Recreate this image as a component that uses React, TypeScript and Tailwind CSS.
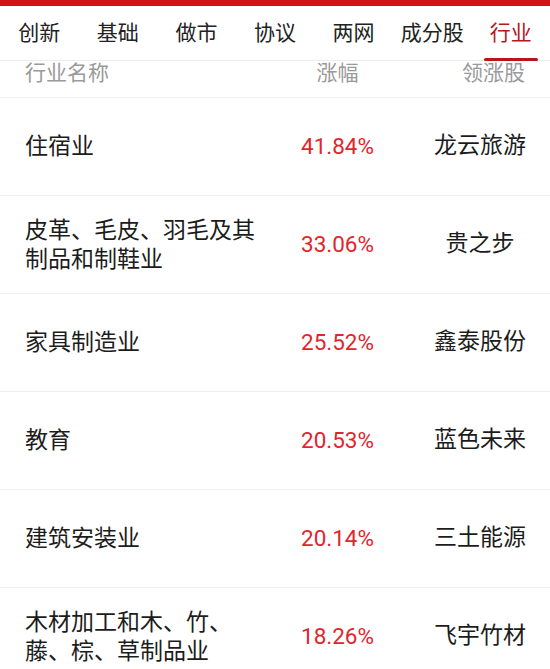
import React from 'react';

const tabs = ['创新', '基础', '做市', '协议', '两网', '成分股', '行业'];

const rows = [
  { name: '住宿业', pct: '41.84%', lead: '龙云旅游' },
  { name: '皮革、毛皮、羽毛及其制品和制鞋业', pct: '33.06%', lead: '贵之步' },
  { name: '家具制造业', pct: '25.52%', lead: '鑫泰股份' },
  { name: '教育', pct: '20.53%', lead: '蓝色未来' },
  { name: '建筑安装业', pct: '20.14%', lead: '三土能源' },
  { name: '木材加工和木、竹、藤、棕、草制品业', pct: '18.26%', lead: '飞宇竹材' },
];

export default function App() {
  return (
    <div
      className="w-[550px] h-[669px] overflow-hidden bg-white"
      style={{ fontFamily: 'Roboto, "Noto Sans CJK SC", sans-serif' }}
    >
      {/* top bar */}
      <div className="h-[6px] bg-[#d0121b]" />

      {/* tabs */}
      <div className="flex h-[55px] border-b border-[#ececec]">
        {tabs.map((t, i) => {
          const active = i === tabs.length - 1;
          return (
            <div key={t} className="relative flex-1 flex items-center justify-center">
              <span className={`text-[21px] leading-none ${active ? 'text-[#b8151c]' : 'text-[#222]'}`}>{t}</span>
              {active && (
                <div className="absolute bottom-[-1px] left-1/2 -translate-x-1/2 w-[54px] h-[3px] rounded-full bg-[#b8151c]" />
              )}
            </div>
          );
        })}
      </div>

      {/* header */}
      <div className="flex h-[37px] border-b border-[#f0f0f0] text-[21px] leading-[24px] text-[#9a9a9a]">
        <div className="w-[265px] pl-[25px]">行业名称</div>
        <div className="w-[145px] text-center">涨幅</div>
        <div className="flex-1 text-right pr-[25px]">领涨股</div>
      </div>

      {/* rows */}
      {rows.map((r) => (
        <div key={r.name} className="flex items-center h-[98px] border-b border-[#f0f0f0]">
          <div className="w-[265px] pl-[25px] pr-[8px] text-[23px] leading-[29px] text-[#1c1c1c]">{r.name}</div>
          <div className="w-[145px] text-center text-[22.5px] text-[#e0262d]">{r.pct}</div>
          <div className="flex-1 text-center text-[23px] text-[#1c1c1c]">{r.lead}</div>
        </div>
      ))}
    </div>
  );
}
